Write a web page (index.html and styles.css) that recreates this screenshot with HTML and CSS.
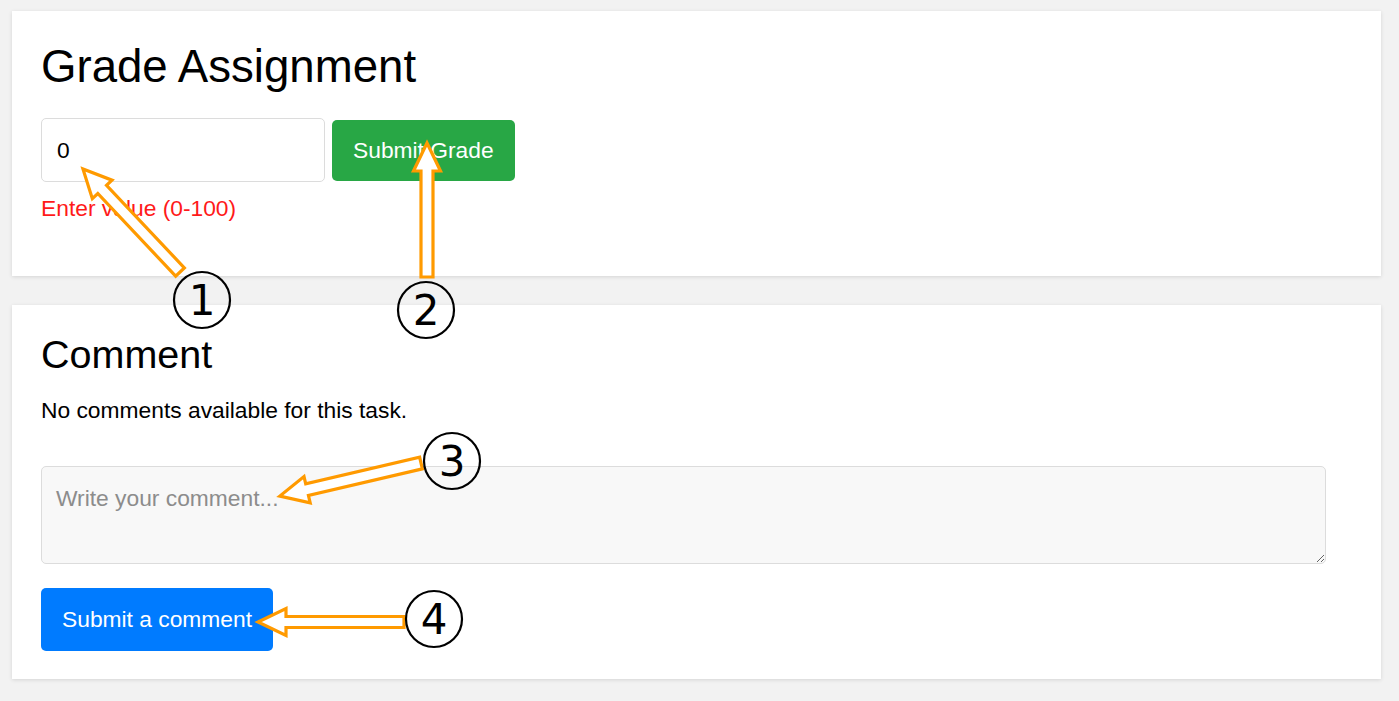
FILE: index.html
```html
<!DOCTYPE html>
<html lang="en">
<head>
<meta charset="utf-8">
<title>Grade Assignment</title>
<link rel="stylesheet" href="styles.css">
</head>
<body>
<main class="page">
  <section class="card grade">
    <h1 class="title">Grade Assignment</h1>
    <div class="grade-row">
      <input class="grade-input" type="text" value="0">
      <button class="btn btn-green">Submit Grade</button>
    </div>
    <p class="error">Enter value (0-100)</p>
  </section>
  <section class="card comments">
    <h2 class="subtitle">Comment</h2>
    <p class="empty">No comments available for this task.</p>
    <textarea class="comment-box" placeholder="Write your comment..."></textarea>
    <button class="btn btn-blue">Submit a comment</button>
  </section>
</main>
<svg class="annotations" width="1399" height="701" viewBox="0 0 1399 701">
  <g class="arrow">
    <polygon transform="translate(180 272) rotate(-133.3)" points="0,-6 113.5,-6 113.5,-13.5 141.5,0 113.5,13.5 113.5,6 0,6"/>
    <polygon transform="translate(427 277) rotate(-90)" points="0,-6 106,-6 106,-13.5 134,0 106,13.5 106,6 0,6"/>
    <polygon transform="translate(421 463) rotate(166.8)" points="0,-6 117,-6 117,-13.5 145,0 117,13.5 117,6 0,6"/>
    <polygon transform="translate(404 622) rotate(180)" points="0,-5.5 118,-5.5 118,-13.5 146,0 118,13.5 118,5.5 0,5.5"/>
  </g>
  <g class="badge">
    <circle cx="202" cy="300" r="28"/>
    <circle cx="426" cy="310" r="28"/>
    <circle cx="452" cy="461" r="28"/>
    <circle cx="434" cy="619" r="28"/>
  </g>
  <g class="badge-num">
    <text x="202" y="315">1</text>
    <text x="426" y="325">2</text>
    <text x="452" y="476">3</text>
    <text x="434" y="634">4</text>
  </g>
</svg>
</body>
</html>
```
FILE: styles.css
```css
body {
  margin: 0;
  background: #f2f2f2;
  font-family: "Liberation Sans", Arial, sans-serif;
  color: #000;
}

.page {
  display: flex;
  flex-direction: column;
  gap: 29px;
  padding: 11px 18px 22px 12px;
}

.card {
  background: #fff;
  box-shadow: 0 1px 4px rgba(0, 0, 0, 0.12);
  padding: 0 29px;
}

.grade {
  padding-top: 30px;
  padding-bottom: 55px;
}

.title {
  margin: 0;
  font-size: 45.6px;
  line-height: 52px;
  font-weight: normal;
}

.grade-row {
  display: flex;
  align-items: center;
  gap: 7px;
  margin-top: 25px;
}

.grade-input {
  width: 284px;
  height: 64px;
  box-sizing: border-box;
  border: 1px solid #dcdcdc;
  border-radius: 5px;
  padding: 0 15px;
  font-family: "Liberation Sans", Arial, sans-serif;
  font-size: 22.8px;
  color: #000;
  outline: none;
}

.btn {
  border: none;
  border-radius: 5px;
  color: #fff;
  font-family: "Liberation Sans", Arial, sans-serif;
  font-size: 22.8px;
  padding: 0 21px;
  cursor: pointer;
}

.btn-green {
  background: #28a745;
  height: 61px;
}

.btn-blue {
  background: #007bff;
  height: 63px;
  margin-top: 24px;
}

.error {
  margin: 13px 0 0;
  color: #ff1a1a;
  font-size: 22.8px;
  line-height: 26px;
}

.comments {
  display: flex;
  flex-direction: column;
  align-items: flex-start;
  padding-top: 27px;
  padding-bottom: 28px;
}

.subtitle {
  margin: 0;
  font-size: 39.5px;
  line-height: 45px;
  font-weight: normal;
}

.empty {
  margin: 20px 0 0;
  font-size: 22.8px;
  line-height: 26px;
}

.comment-box {
  margin-top: 43px;
  width: 98%;
  height: 98px;
  box-sizing: border-box;
  background: #f8f8f8;
  border: 1px solid #dcdcdc;
  border-radius: 5px;
  padding: 18px 14px;
  font-family: "Liberation Sans", Arial, sans-serif;
  font-size: 22.8px;
  line-height: 26px;
  outline: none;
}

.comment-box::placeholder {
  color: #8c8c8c;
}

.annotations {
  position: absolute;
  top: 0;
  left: 0;
  pointer-events: none;
}

.arrow polygon {
  fill: #fff;
  stroke: #ff9a00;
  stroke-width: 3.2;
  stroke-linejoin: miter;
}

.badge circle {
  fill: none;
  stroke: #000;
  stroke-width: 2.2;
}

.badge-num text {
  font-family: "DejaVu Sans", sans-serif;
  font-size: 42px;
  text-anchor: middle;
  fill: #000;
}
```
